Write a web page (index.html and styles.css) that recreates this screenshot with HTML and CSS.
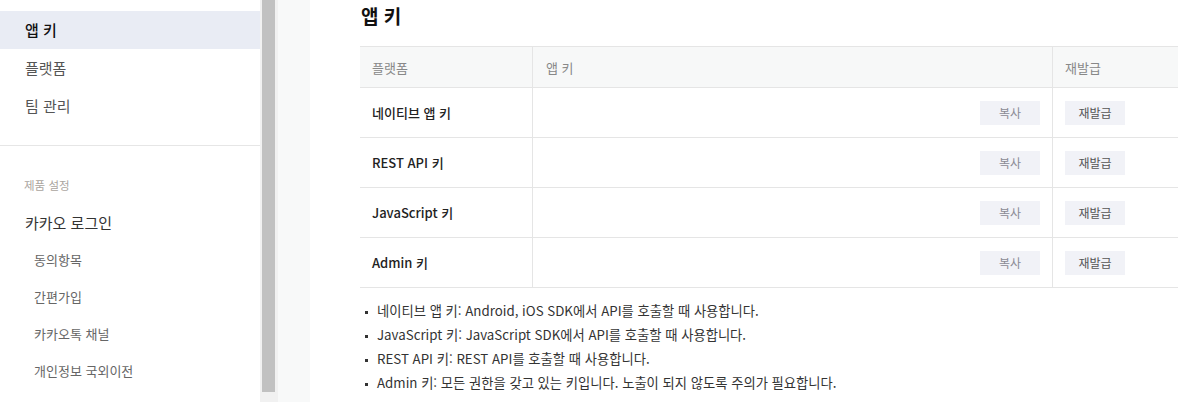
FILE: index.html
```html
<!DOCTYPE html>
<html lang="ko">
<head>
<meta charset="utf-8">
<title>앱 키</title>
<link rel="stylesheet" href="styles.css">
</head>
<body>
<div class="app">
  <nav class="sidebar">
    <ul class="menu">
      <li class="menu-item active">앱 키</li>
      <li class="menu-item">플랫폼</li>
      <li class="menu-item">팀 관리</li>
    </ul>
    <div class="section">
      <div class="section-label">제품 설정</div>
      <div class="menu-item">카카오 로그인</div>
      <ul class="submenu">
        <li class="sub-item">동의항목</li>
        <li class="sub-item">간편가입</li>
        <li class="sub-item">카카오톡 채널</li>
        <li class="sub-item">개인정보 국외이전</li>
        <li class="sub-item">고급 설정</li>
      </ul>
    </div>
  </nav>
  <div class="scrollbar"><div class="thumb"></div></div>
  <div class="gutter"></div>
  <main class="main">
    <h2 class="title">앱 키</h2>
    <div class="keys">
      <div class="row head">
        <div class="cell c1">플랫폼</div>
        <div class="cell c2">앱 키</div>
        <div class="cell c3">재발급</div>
      </div>
      <div class="row">
        <div class="cell c1 label">네이티브 앱 키</div>
        <div class="cell c2 act"><button class="btn copy">복사</button></div>
        <div class="cell c3"><button class="btn">재발급</button></div>
      </div>
      <div class="row">
        <div class="cell c1 label">REST API 키</div>
        <div class="cell c2 act"><button class="btn copy">복사</button></div>
        <div class="cell c3"><button class="btn">재발급</button></div>
      </div>
      <div class="row">
        <div class="cell c1 label">JavaScript 키</div>
        <div class="cell c2 act"><button class="btn copy">복사</button></div>
        <div class="cell c3"><button class="btn">재발급</button></div>
      </div>
      <div class="row">
        <div class="cell c1 label">Admin 키</div>
        <div class="cell c2 act"><button class="btn copy">복사</button></div>
        <div class="cell c3"><button class="btn">재발급</button></div>
      </div>
    </div>
    <ul class="notes">
      <li>네이티브 앱 키: Android, iOS SDK에서 API를 호출할 때 사용합니다.</li>
      <li>JavaScript 키: JavaScript SDK에서 API를 호출할 때 사용합니다.</li>
      <li>REST API 키: REST API를 호출할 때 사용합니다.</li>
      <li>Admin 키: 모든 권한을 갖고 있는 키입니다. 노출이 되지 않도록 주의가 필요합니다.</li>
    </ul>
  </main>
</div>
</body>
</html>
```
FILE: styles.css
```css
* { box-sizing: border-box; }
html, body {
  margin: 0;
  padding: 0;
  height: 402px;
  overflow: hidden;
  background: #fff;
  font-family: "Noto Sans CJK KR", "Noto Sans", sans-serif;
  color: #333;
}
ul { list-style: none; margin: 0; padding: 0; }

.app {
  display: flex;
  height: 402px;
}

/* sidebar */
.sidebar {
  width: 260px;
  flex: none;
  padding-top: 11px;
  background: #fff;
}
.menu {
  border-bottom: 1px solid #e6e6e6;
  padding-bottom: 20px;
}
.menu-item {
  height: 38px;
  line-height: 38px;
  padding-left: 25px;
  font-size: 15px;
  color: #555;
}
.menu-item.active {
  background: #e9ecf4;
  color: #111;
  font-weight: 500;
}
.section {
  padding-top: 20px;
}
.section-label {
  height: 38px;
  line-height: 38px;
  padding-left: 24px;
  font-size: 11.5px;
  color: #aaa49e;
}
.section .menu-item {
  height: 37px;
  line-height: 37px;
  color: #333;
}
.sub-item {
  height: 37px;
  line-height: 37px;
  padding-left: 34px;
  font-size: 13px;
  color: #666;
}

/* fake scrollbar */
.scrollbar {
  width: 18px;
  flex: none;
  background: #f1f1f1;
  padding: 0 3px 0 2px;
}
.thumb {
  height: 392px;
  background: #c1c1c1;
}
.gutter {
  width: 32px;
  flex: none;
  background: #f8f9f9;
}

/* main */
.main {
  flex: 1;
  padding-left: 50px;
  background: #fff;
  min-width: 0;
}
.title {
  margin: 3px 0 0 1px;
  font-size: 19px;
  line-height: 26px;
  font-weight: 700;
  color: #111;
}
.keys {
  margin-top: 17px;
  border-top: 1px solid #e5e5e5;
}
.row {
  display: grid;
  grid-template-columns: 173px 520px 1fr;
  height: 50px;
  border-bottom: 1px solid #e5e5e5;
}
.row.head {
  height: 41px;
  background: #f7f8f8;
}
.cell {
  display: flex;
  align-items: center;
  padding: 0 12px;
  font-size: 13px;
}
.head .cell {
  color: #888;
}
.head .c2 { padding-left: 13px; }
.c1, .c2 {
  border-right: 1px solid #e5e5e5;
}
.label {
  color: #222;
  font-weight: 500;
}
.act {
  justify-content: flex-end;
}
.btn {
  width: 60px;
  height: 24px;
  border: none;
  border-radius: 0;
  background: #f1f2f7;
  font-family: inherit;
  font-size: 12px;
  color: #555;
  padding: 0;
  cursor: pointer;
}
.btn.copy {
  color: #8a8a94;
}

.notes {
  margin-top: 11px;
  padding-left: 17px;
}
.notes li {
  position: relative;
  font-size: 13.3px;
  line-height: 24px;
  color: #333;
}
.notes li::before {
  content: "";
  position: absolute;
  left: -12px;
  top: 12px;
  width: 3px;
  height: 3px;
  background: #333;
}
```
